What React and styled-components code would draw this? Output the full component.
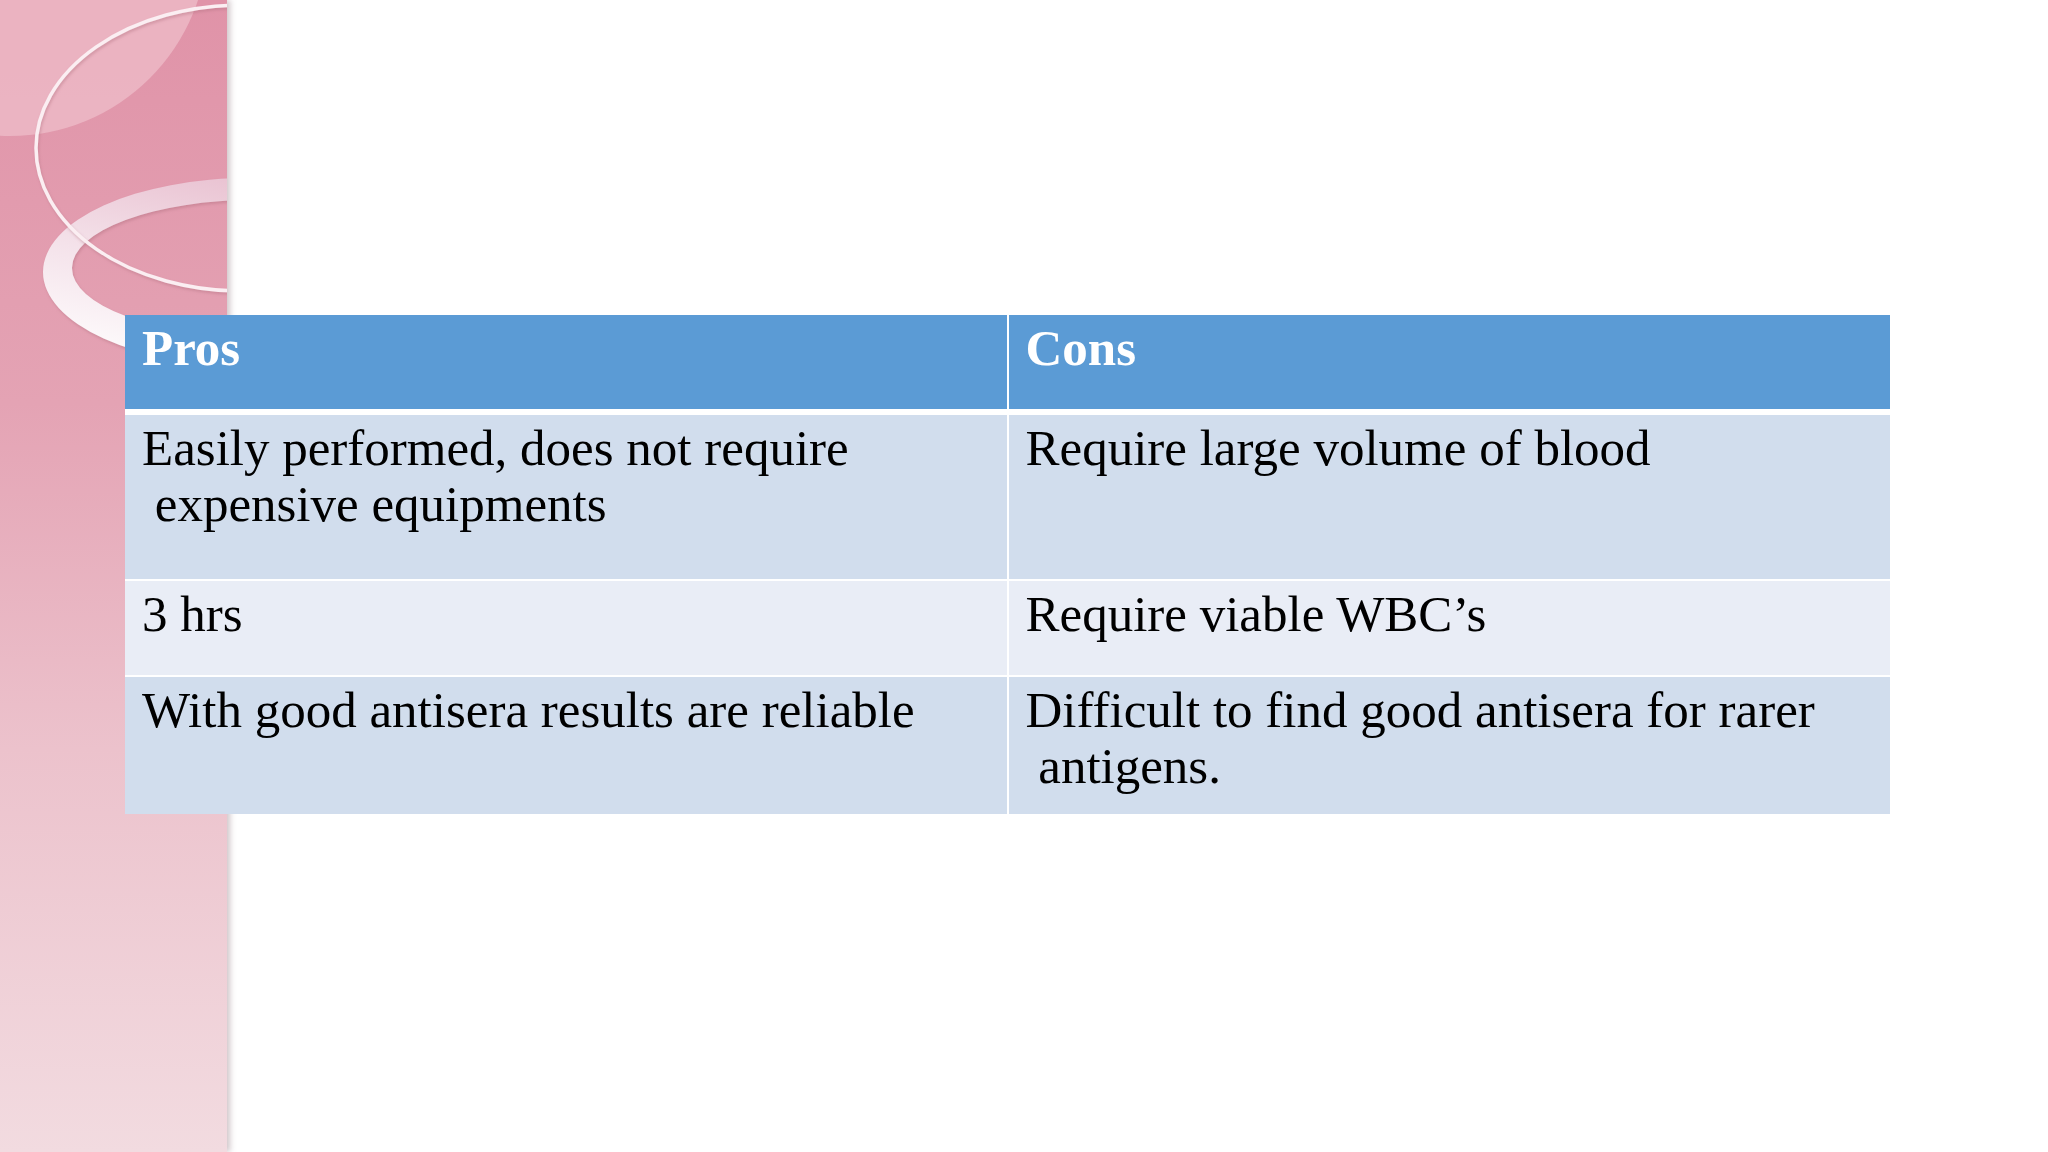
import React from 'react'
import styled, {createGlobalStyle} from 'styled-components';

const GlobalStyle = createGlobalStyle`
  html, body {
    margin: 0;
    padding: 0;
    background: #ffffff;
  }
`
const Page = styled.div`
  width: 2048px;
  height: 1152px;
  display: grid;
  grid-template-columns: 227px 1fr;
  grid-template-rows: 1152px;
  overflow: hidden;
  background: #ffffff;
`
const Panel = styled.div`
  grid-column: 1;
  grid-row: 1;
  background: linear-gradient(180deg, #e093a8 0%, #e4a3b4 35%, #ecc2cc 65%, #f2dbe0 100%);
  box-shadow: 3px 0 6px rgba(120, 90, 100, 0.35);
  overflow: hidden;
  svg {
    display: block;
  }
`
const Content = styled.div`
  grid-column: 1 / -1;
  grid-row: 1;
  z-index: 1;
  padding: 315px 158px 0 125px;
`
const Table = styled.div`
  display: grid;
  grid-template-columns: 1fr 1fr;
  column-gap: 2px;
  background: #ffffff;
  font-family: "Liberation Serif", "Times New Roman", serif;
`
const Cell = styled.div`
  height: ${p => p.h}px;
  box-sizing: border-box;
  padding: 5px 17px 0 17px;
  font-size: 51px;
  line-height: 56px;
  color: ${p => p.head ? '#ffffff' : '#000000'};
  font-weight: ${p => p.head ? 700 : 400};
  background: ${p => p.head ? '#5b9bd5' : p.alt ? '#e9edf6' : '#d1dded'};
  margin-bottom: ${p => p.gap}px;
`

const rows = [
    {h: 164, alt: false, gap: 2, pros: ['Easily performed, does not require', '\u00a0expensive equipments'], cons: ['Require large volume of blood']},
    {h: 94, alt: true, gap: 2, pros: ['3 hrs'], cons: ['Require viable WBC\u2019s']},
    {h: 137, alt: false, gap: 0, pros: ['With good antisera results are reliable'], cons: ['Difficult to find good antisera for rarer', '\u00a0antigens.']},
]

const Lines = ({lines}) => lines.map((l, i) => (
    <React.Fragment key={i}>{i > 0 && <br/>}{l}</React.Fragment>
))

const Swirl = () => (
    <svg width="227" height="1152" viewBox="0 0 227 1152">
        <defs>
            <linearGradient id="ring" x1="0.6" y1="0" x2="0.1" y2="1">
                <stop offset="0" stopColor="#e8bfcf"/>
                <stop offset="0.5" stopColor="#f4e2ea"/>
                <stop offset="1" stopColor="#ffffff"/>
            </linearGradient>
            <filter id="soft" x="-10%" y="-10%" width="120%" height="120%">
                <feDropShadow dx="1" dy="2" stdDeviation="1.5" floodColor="#b0707f" floodOpacity="0.45"/>
            </filter>
        </defs>
        <circle cx="10" cy="-62" r="198" fill="#ecb9c6" opacity="0.85"/>
        <path fillRule="evenodd" fill="url(#ring)" filter="url(#soft)"
              d="M 43 272 A 207 94 0 1 0 457 272 A 207 94 0 1 0 43 272 Z M 72 268 A 183 68 0 1 1 438 268 A 183 68 0 1 1 72 268 Z"/>
        <ellipse cx="242" cy="148" rx="206" ry="143" fill="none" stroke="#fbeef2" strokeWidth="3.5" filter="url(#soft)"/>
    </svg>
)

const App = () => {
    return (
        <Page>
            <GlobalStyle/>
            <Panel>
                <Swirl/>
            </Panel>
            <Content>
                <Table>
                    <Cell head h={94} gap={6}>Pros</Cell>
                    <Cell head h={94} gap={6}>Cons</Cell>
                    {rows.map((r, i) => (
                        <React.Fragment key={i}>
                            <Cell h={r.h} alt={r.alt} gap={r.gap}><Lines lines={r.pros}/></Cell>
                            <Cell h={r.h} alt={r.alt} gap={r.gap}><Lines lines={r.cons}/></Cell>
                        </React.Fragment>
                    ))}
                </Table>
            </Content>
        </Page>
    )
}

export default App
